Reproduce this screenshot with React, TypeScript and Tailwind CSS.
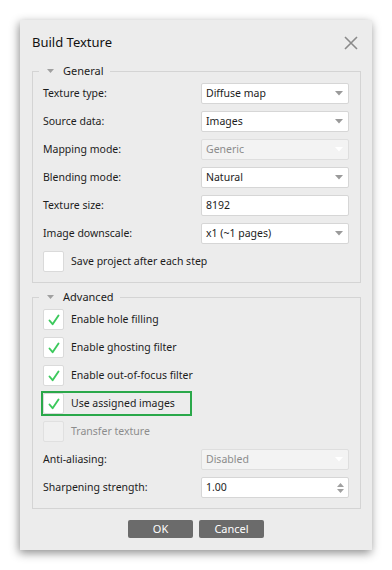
import React from "react";

const font = { fontFamily: '"Noto Sans", "Open Sans", sans-serif' };

function Arrow({ disabled }: { disabled?: boolean }) {
  return (
    <svg width="8" height="5" viewBox="0 0 8 5" className="shrink-0">
      <path d="M0 0 H8 L4 4.5 Z" fill={disabled ? "#ffffff" : "#9a9a9a"} />
    </svg>
  );
}

function Select({ value, disabled }: { value: string; disabled?: boolean }) {
  return (
    <div
      className={`w-[148px] h-[21px] rounded-[2px] border flex items-center justify-between pl-[4px] pr-[5px] ${
        disabled ? "bg-[#f3f3f3] border-[#dedede] text-[#8c8c8c]" : "bg-white border-[#d6d6d6] text-[#1c1c1c]"
      }`}
    >
      <span className="pt-[1px]">{value}</span>
      <Arrow disabled={disabled} />
    </div>
  );
}

function Input({ value }: { value: string }) {
  return (
    <div className="w-[148px] h-[21px] rounded-[2px] border bg-white border-[#d6d6d6] text-[#1c1c1c] flex items-center pl-[4px]">
      <span className="pt-[1px]">{value}</span>
    </div>
  );
}

function Spin({ value }: { value: string }) {
  return (
    <div className="w-[148px] h-[21px] rounded-[2px] border bg-white border-[#d6d6d6] text-[#1c1c1c] flex items-center justify-between pl-[4px] pr-[4px]">
      <span className="pt-[1px]">{value}</span>
      <div className="flex flex-col gap-[2px]">
        <svg width="7" height="4" viewBox="0 0 7 4">
          <path d="M0 4 H7 L3.5 0 Z" fill="#a0a0a0" />
        </svg>
        <svg width="7" height="4" viewBox="0 0 7 4">
          <path d="M0 0 H7 L3.5 4 Z" fill="#a0a0a0" />
        </svg>
      </div>
    </div>
  );
}

function Row({ label, children }: { label: string; children: React.ReactNode }) {
  return (
    <div className="h-[21px] flex items-center justify-between">
      <span className="text-[#1c1c1c] pt-[1px]">{label}</span>
      {children}
    </div>
  );
}

function Check({
  label,
  checked,
  disabled,
  highlight,
}: {
  label: string;
  checked?: boolean;
  disabled?: boolean;
  highlight?: boolean;
}) {
  return (
    <div
      className={`h-[21px] flex items-center gap-[7px] ${
        highlight ? "w-[147px] outline-2 outline-[#2aa84a]" : ""
      }`}
    >
      <div
        className={`w-[21px] h-[21px] rounded-[2px] border flex items-center justify-center ${
          disabled ? "bg-[#f0f0f0] border-[#e0e0e0]" : "bg-white border-[#dadada]"
        }`}
      >
        {checked && (
          <svg width="12" height="12" viewBox="0 0 12 12">
            <path
              d="M1.5 6.5 L4.6 10.2 L10.5 1.5"
              fill="none"
              stroke="#3cc95c"
              strokeWidth="1.9"
              strokeLinecap="round"
              strokeLinejoin="round"
            />
          </svg>
        )}
      </div>
      <span className={`pt-[1px] ${disabled ? "text-[#8c8c8c]" : "text-[#1c1c1c]"}`}>{label}</span>
    </div>
  );
}

function Group({ title, children, className = "" }: { title: string; children: React.ReactNode; className?: string }) {
  return (
    <fieldset className={`ml-[12px] mr-[11px] border border-[#d4d4d4] ${className}`}>
      <legend className="ml-[6px] pl-[8px] pr-[6px] leading-[16px] text-[#1c1c1c]">
        <span className="flex items-center gap-[9px]">
          <svg width="7" height="4" viewBox="0 0 7 4">
            <path d="M0 0 H7 L3.5 4 Z" fill="#a0a0a0" />
          </svg>
          <span className="text-[11px]">{title}</span>
        </span>
      </legend>
      <div className="pt-[4px] pb-[10px] pl-[10px] pr-[11px] flex flex-col gap-[7px]">{children}</div>
    </fieldset>
  );
}

export default function App() {
  return (
    <div className="w-[392px] h-[570px] bg-white pl-[20px] pt-[20px] text-[10.5px]" style={font}>
      <div className="w-[352px] h-[530px] bg-[#ececec] shadow-[-1px_3px_9px_rgba(0,0,0,0.45)] flex flex-col">
        <div className="h-[43px] pt-[3px] pl-[12px] pr-[14px] flex items-center justify-between">
          <span className="text-[13px] text-[#111]">Build Texture</span>
          <svg width="14" height="14" viewBox="0 0 14 14">
            <path d="M1 1 L13 13 M13 1 L1 13" stroke="#8a8a8a" strokeWidth="1.6" />
          </svg>
        </div>
        <Group title="General">
          <Row label="Texture type:">
            <Select value="Diffuse map" />
          </Row>
          <Row label="Source data:">
            <Select value="Images" />
          </Row>
          <Row label="Mapping mode:">
            <Select value="Generic" disabled />
          </Row>
          <Row label="Blending mode:">
            <Select value="Natural" />
          </Row>
          <Row label="Texture size:">
            <Input value="8192" />
          </Row>
          <Row label="Image downscale:">
            <Select value="x1 (~1 pages)" />
          </Row>
          <Check label="Save project after each step" />
        </Group>
        <Group title="Advanced" className="mt-[6px]">
          <Check label="Enable hole filling" checked />
          <Check label="Enable ghosting filter" checked />
          <Check label="Enable out-of-focus filter" checked />
          <Check label="Use assigned images" checked highlight />
          <Check label="Transfer texture" disabled />
          <Row label="Anti-aliasing:">
            <Select value="Disabled" disabled />
          </Row>
          <Row label="Sharpening strength:">
            <Spin value="1.00" />
          </Row>
        </Group>
        <div className="mt-[11px] flex justify-center gap-[6px]">
          <div className="w-[65px] h-[18px] rounded-[2px] bg-[#6b6b6b] text-white text-[11px] flex items-center justify-center">OK</div>
          <div className="w-[65px] h-[18px] rounded-[2px] bg-[#6b6b6b] text-white text-[11px] flex items-center justify-center">Cancel</div>
        </div>
      </div>
    </div>
  );
}
